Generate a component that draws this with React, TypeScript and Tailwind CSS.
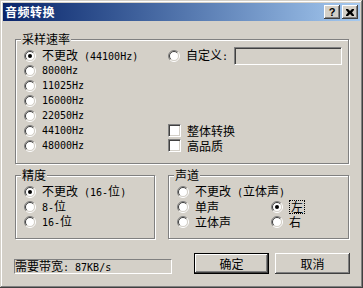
import React from 'react';

const L: React.FC<{ children: React.ReactNode; className?: string }> = ({ children, className = '' }) => (
  <span className={`font-['DejaVu_Sans_Mono',monospace] text-[10px] ${className}`}>{children}</span>
);

const Radio: React.FC<{ checked?: boolean }> = ({ checked }) => (
  <svg width="12" height="12" viewBox="0 0 12 12" className="shrink-0">
    <circle cx="6" cy="6" r="4.5" fill="#fff" />
    <path d="M2.1 9.9A5.5 5.5 0 0 1 9.9 2.1" fill="none" stroke="#808080" />
    <path d="M2.8 9.2A4.5 4.5 0 0 1 9.2 2.8" fill="none" stroke="#404040" />
    <path d="M9.9 2.1A5.5 5.5 0 0 1 2.1 9.9" fill="none" stroke="#fff" />
    <path d="M9.2 2.8A4.5 4.5 0 0 1 2.8 9.2" fill="none" stroke="#d4d0c8" />
    {checked && <circle cx="6" cy="6" r="2" fill="#000" />}
  </svg>
);

const Check: React.FC = () => (
  <div className="w-[13px] h-[13px] shrink-0 bg-white border border-t-[#808080] border-l-[#808080] border-r-white border-b-white shadow-[inset_1px_1px_0_#404040,inset_-1px_-1px_0_#d4d0c8]" />
);

const Row: React.FC<{ children: React.ReactNode; className?: string }> = ({ children, className = '' }) => (
  <div className={`h-[15px] flex items-center gap-[6px] leading-[13px] whitespace-nowrap ${className}`}>{children}</div>
);

const Group: React.FC<{ title: string; className: string; children: React.ReactNode }> = ({ title, className, children }) => (
  <div className={`relative border border-[#808080] shadow-[inset_1px_1px_0_#fff,1px_1px_0_#fff] pt-[8px] pl-[8px] ${className}`}>
    <span className="absolute -top-[8px] left-[5px] px-[1px] bg-[#d4d0c8] leading-[14px]">{title}</span>
    {children}
  </div>
);

export default function App() {
  return (
    <div className="w-[363px] h-[288px] bg-[#d4d0c8] p-[3px] flex flex-col text-[12px] text-black font-['Noto_Sans_CJK_SC',sans-serif] shadow-[inset_-1px_-1px_0_#404040,inset_1px_1px_0_#d4d0c8,inset_-2px_-2px_0_#808080,inset_2px_2px_0_#fff]">
      {/* Title bar */}
      <div className="h-[18px] flex items-center pl-[2px] pr-[2px] bg-gradient-to-r from-[#0a246a] to-[#a6caf0]">
        <span className="text-white font-bold text-[12px] tracking-[0.5px] leading-none">音频转换</span>
        <div className="ml-auto flex gap-[2px]">
          <div className="w-[16px] h-[14px] bg-[#d4d0c8] flex items-center justify-center shadow-[inset_-1px_-1px_0_#404040,inset_1px_1px_0_#fff,inset_-2px_-2px_0_#808080]">
            <span className="font-['Liberation_Sans',sans-serif] font-bold text-[11px] leading-none">?</span>
          </div>
          <div className="w-[16px] h-[14px] bg-[#d4d0c8] flex items-center justify-center shadow-[inset_-1px_-1px_0_#404040,inset_1px_1px_0_#fff,inset_-2px_-2px_0_#808080]">
            <svg width="8" height="7" viewBox="0 0 8 7">
              <path d="M0 0h2l2 2 2-2h2v1L6 3.5 8 6v1H6L4 5 2 7H0V6l2-2.5L0 1z" fill="#000" />
            </svg>
          </div>
        </div>
      </div>

      {/* 采样速率 */}
      <Group title="采样速率" className="mt-[18px] ml-[12px] w-[334px] h-[125px] flex">
        <div className="w-[144px] flex flex-col">
          <Row><Radio checked /><span>不更改<L className="ml-[6px]">(44100Hz)</L></span></Row>
          <Row><Radio /><L>8000Hz</L></Row>
          <Row><Radio /><L>11025Hz</L></Row>
          <Row><Radio /><L>16000Hz</L></Row>
          <Row><Radio /><L>22050Hz</L></Row>
          <Row><Radio /><L>44100Hz</L></Row>
          <Row><Radio /><L>48000Hz</L></Row>
        </div>
        <div className="flex flex-col">
          <Row>
            <Radio />
            <span>自定义<L>:</L></span>
            <div className="w-[108px] h-[18px] bg-[#d4d0c8] border border-t-[#808080] border-l-[#808080] border-r-white border-b-white shadow-[inset_1px_1px_0_#404040,inset_-1px_-1px_0_#d4d0c8]" />
          </Row>
          <div className="h-[60px]" />
          <Row className="gap-[5px]"><Check /><span>整体转换</span></Row>
          <Row className="gap-[5px]"><Check /><span>高品质</span></Row>
        </div>
      </Group>

      <div className="flex mt-[11px] ml-[12px]">
        <Group title="精度" className="w-[140px] h-[64px]">
          <Row><Radio checked /><span>不更改<L className="ml-[6px]">(16-</L>位<L>)</L></span></Row>
          <Row><Radio /><span><L>8-</L>位</span></Row>
          <Row><Radio /><span><L>16-</L>位</span></Row>
        </Group>
        <Group title="声道" className="ml-[13px] w-[181px] h-[64px]">
          <Row><Radio /><span>不更改<L className="ml-[6px]">(</L>立体声<L>)</L></span></Row>
          <div className="flex">
            <Row className="w-[94px]"><Radio /><span>单声</span></Row>
            <Row className="gap-[3px]">
              <Radio checked />
              <span className="border border-dotted border-black px-[1px] leading-[12px]">左</span>
            </Row>
          </div>
          <div className="flex">
            <Row className="w-[94px]"><Radio /><span>立体声</span></Row>
            <Row><Radio /><span>右</span></Row>
          </div>
        </Group>
      </div>

      {/* Bottom */}
      <div className="flex mt-[14px] ml-[11px]">
        <div className="mt-[6px] w-[158px] h-[15px] border border-t-[#808080] border-l-[#808080] border-r-white border-b-white flex items-center leading-[13px] whitespace-nowrap">
          <span>需要带宽<L>: 87KB/s</L></span>
        </div>
        <button className="ml-[22px] w-[75px] h-[21px] bg-[#d4d0c8] border border-black shadow-[inset_-1px_-1px_0_#404040,inset_1px_1px_0_#fff,inset_-2px_-2px_0_#808080] flex items-center justify-center leading-none">
          确定
        </button>
        <button className="ml-[6px] w-[75px] h-[21px] bg-[#d4d0c8] shadow-[inset_-1px_-1px_0_#404040,inset_1px_1px_0_#fff,inset_-2px_-2px_0_#808080] flex items-center justify-center leading-none">
          取消
        </button>
      </div>
    </div>
  );
}
